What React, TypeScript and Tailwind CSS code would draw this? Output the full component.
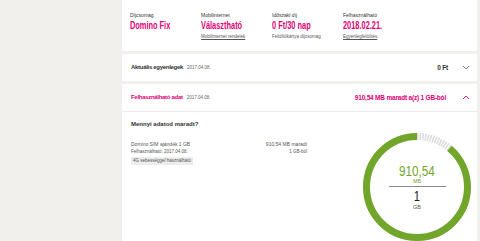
const pink = "text-[#e20074]";

function Chevron({ up, className }: { up?: boolean; className?: string }) {
  return (
    <svg width="8" height="5" viewBox="0 0 8 5" className={className}>
      <polyline
        points={up ? "1,4 4,1 7,4" : "1,1 4,4 7,1"}
        fill="none"
        stroke="currentColor"
        strokeWidth="0.9"
      />
    </svg>
  );
}

function Donut() {
  const r = 50.5;
  const c = 2 * Math.PI * r;
  const used = 0.111;
  return (
    <div className="relative w-[108px] h-[108px]">
      <svg width="108" height="108" viewBox="0 0 108 108" className="absolute inset-0">
        <g transform="rotate(-90 54 54)">
          <circle cx="54" cy="54" r={r} fill="none" stroke="#dcdcdc" strokeWidth="7" strokeDasharray="1.6 1" />
          <circle
            cx="54"
            cy="54"
            r={r}
            fill="none"
            stroke="#72a62b"
            strokeWidth="7"
            strokeDasharray={`${c * (1 - used)} ${c}`}
            strokeDashoffset={-c * used}
          />
        </g>
      </svg>
      <div className="absolute inset-0 flex flex-col items-center pt-[30px]">
        <div className="text-[15px] leading-[15px] text-[#72a62b] scale-x-[0.78]">910,54</div>
        <div className="text-[5.5px] leading-[7px] text-[#72a62b]">MB</div>
        <div className="w-[57px] h-px bg-[#8a8a8a] mt-[1px]" />
        <div className="text-[14px] leading-[14px] text-[#222] mt-[2px] scale-x-[0.8]">1</div>
        <div className="text-[5.5px] leading-[8px] text-[#555]">GB</div>
      </div>
    </div>
  );
}

function Plan({ label, value, sub, link }: { label: string; value: string; sub: string; link?: boolean }) {
  return (
    <div className="w-[71px] flex flex-col">
      <div className="text-[5px] leading-[6px] text-[#333]">{label}</div>
      <div className={`text-[10px] leading-[11px] font-bold ${pink} mt-[2px] origin-left scale-x-[0.74] whitespace-nowrap`}>{value}</div>
      <div className={`text-[4.5px] leading-[6px] text-[#555] mt-[3px] ${link ? "underline" : ""}`}>{sub}</div>
    </div>
  );
}

function Header({ title, value, pinkTitle, open }: { title: string; value: string; pinkTitle?: boolean; open?: boolean }) {
  return (
    <div className={`flex items-center pl-[9px] pr-[7px] ${open ? "h-[28px] border-b border-[#ebebeb]" : "h-[27px]"}`}>
      <div className="flex items-baseline gap-[4px]">
        <span className={`text-[6px] font-bold tracking-[-0.3px] ${pinkTitle ? pink : "text-[#333]"}`}>{title}</span>
        <span className="text-[4.5px] text-[#666]">2017.04.08.</span>
      </div>
      <span className={`ml-auto text-[6.5px] font-bold tracking-[-0.2px] ${pinkTitle ? pink : "text-[#333]"}`}>{value}</span>
      <Chevron up={open} className={`${open ? "ml-[16px] text-[#e20074]" : "ml-[14px] text-[#777]"}`} />
    </div>
  );
}

export default function App() {
  return (
    <div className="flex w-[480px] h-[241px] overflow-hidden bg-[#f1f0ec] font-['Liberation_Sans',Arial,sans-serif]">
      <div className="w-[122px] shrink-0" />
      <div className="w-[355px] flex flex-col gap-[3px]">
        <div className="bg-white h-[51px] flex pl-[8px] pt-[12px]">
          <Plan label="Díjcsomag" value="Domino Fix" sub="" />
          <Plan label="Mobilinternet" value="Választható" sub="Mobilinternet rendelek" link />
          <Plan label="Időszaki díj" value="0 Ft/30 nap" sub="Feltöltőkártya díjcsomag" />
          <Plan label="Felhasználható" value="2018.02.21." sub="Egyenlegfeltöltés" link />
        </div>
        <div className="bg-white">
          <Header title="Aktuális egyenlegek" value="0 Ft" />
        </div>
        <div className="bg-white flex-1 flex flex-col">
          <Header title="Felhasználható adat" value="910,54 MB maradt a(z) 1 GB-ból" pinkTitle open />
          <div className="flex pl-[9px] pt-[8px]">
            <div className="w-[176px] flex flex-col">
              <div className="text-[6px] font-bold text-[#333] leading-[8px]">Mennyi adatod maradt?</div>
              <div className="flex justify-between mt-[12px] text-[5px] leading-[8px] text-[#555]">
                <div className="flex flex-col">
                  <span>Domino SIM ajándék 1 GB</span>
                  <span className="text-[4.5px]">Felhasználható: 2017.04.08.</span>
                  <span className="mt-[1px] bg-[#ececec] px-[2px] text-[4.5px] leading-[8px] self-start">4G sebességgel használható</span>
                </div>
                <div className="flex flex-col items-end">
                  <span>910,54 MB maradt</span>
                  <span className="text-[4.5px]">1 GB-ból</span>
                </div>
              </div>
            </div>
            <div className="ml-[56px] mt-[13px]">
              <Donut />
            </div>
          </div>
        </div>
      </div>
    </div>
  );
}
